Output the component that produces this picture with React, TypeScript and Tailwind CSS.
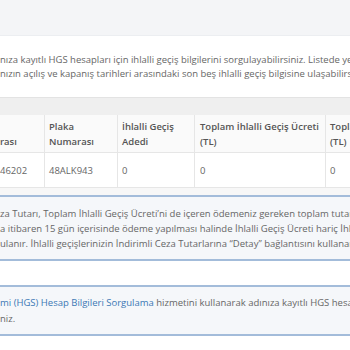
export default function App() {
  const font = { fontFamily: '"Open Sans", "Noto Sans", sans-serif' };
  return (
    <div className="w-[350px] h-[350px] overflow-hidden bg-white text-[9.5px] text-[#666]" style={font}>
      <div className="h-[36px] bg-[#f4f5f7] border-b border-[#eceef1]" />
      <div className="h-[61px] flex flex-col justify-center leading-[13.5px] whitespace-nowrap">
        <div>nıza kayıtlı HGS hesapları için ihlalli geçiş bilgilerini sorgulayabilirsiniz. Listede yer alan</div>
        <div>nızın açılış ve kapanış tarihleri arasındaki son beş ihlalli geçiş bilgisine ulaşabilirsiniz.</div>
      </div>
      <div className="h-[18px] bg-[#efefef] border-t border-[#e3e3e3]" />
      <div className="grid grid-cols-[45px_73px_77px_131px_60px] leading-[15px] whitespace-nowrap">
        <div className="h-[38px] flex items-center bg-[#fafafa] border-r border-b border-[#e6e6e6] font-semibold text-[#555]">
          <div className="pt-[15px]">rası</div>
        </div>
        <div className="h-[38px] flex flex-col justify-center pl-[4px] bg-[#fafafa] border-r border-b border-[#e6e6e6] font-semibold text-[#555]">
          <div>Plaka</div>
          <div>Numarası</div>
        </div>
        <div className="h-[38px] flex flex-col justify-center pl-[4px] bg-[#fafafa] border-r border-b border-[#e6e6e6] font-semibold text-[#555]">
          <div>İhlalli Geçiş</div>
          <div>Adedi</div>
        </div>
        <div className="h-[38px] flex flex-col justify-center pl-[5px] bg-[#fafafa] border-r border-b border-[#e6e6e6] font-semibold text-[#555]">
          <div>Toplam İhlalli Geçiş Ücreti</div>
          <div>(TL)</div>
        </div>
        <div className="h-[38px] flex flex-col justify-center pl-[4px] bg-[#fafafa] border-b border-[#e6e6e6] font-semibold text-[#555]">
          <div>Toplam İhlalli Ceza</div>
          <div>(TL)</div>
        </div>
        <div className="h-[35px] flex items-center border-r border-b border-[#e6e6e6]">46202</div>
        <div className="h-[35px] flex items-center pl-[4px] border-r border-b border-[#e6e6e6]">48ALK943</div>
        <div className="h-[35px] flex items-center pl-[4px] border-r border-b border-[#e6e6e6]">0</div>
        <div className="h-[35px] flex items-center pl-[5px] border-r border-b border-[#e6e6e6]">0</div>
        <div className="h-[35px] flex items-center pl-[4px] border-b border-[#e6e6e6]">0</div>
      </div>
      <div className="h-[7px] bg-[#f7f7f7]" />
      <div className="h-[66px] flex flex-col justify-center bg-[#f5f7fa] border-y-2 border-[#a3bcda] leading-[15px] whitespace-nowrap">
        <div>za Tutarı, Toplam İhlalli Geçiş Ücreti’ni de içeren ödemeniz gereken toplam tutarı</div>
        <div>a itibaren 15 gün içerisinde ödeme yapılması halinde İhlalli Geçiş Ücreti hariç İhlalli</div>
        <div>ulanır. İhlalli geçişlerinizin İndirimli Ceza Tutarlarına “Detay” bağlantısını kullanarak</div>
      </div>
      <div className="h-[24px]" />
      <div className="h-[51px] flex flex-col justify-center bg-[#f5f7fa] border-y-2 border-[#a3bcda] leading-[16px] whitespace-nowrap">
        <div>
          <span className="text-[#3b78b5]">mi (HGS) Hesap Bilgileri Sorgulama</span> hizmetini kullanarak adınıza kayıtlı HGS hesaplarınızı
        </div>
        <div>niz.</div>
      </div>
    </div>
  );
}
